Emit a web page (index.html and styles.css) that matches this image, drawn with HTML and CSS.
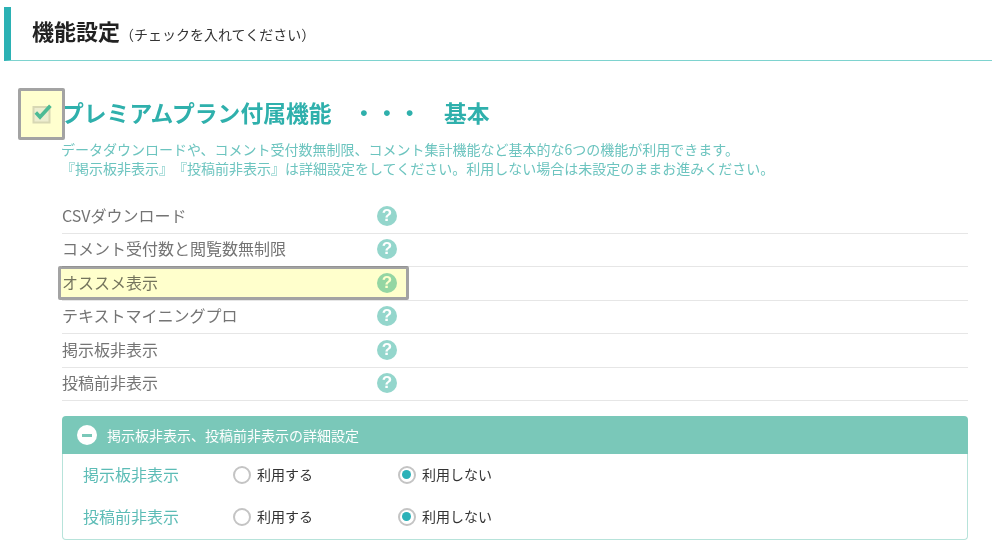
FILE: index.html
```html
<!DOCTYPE html>
<html lang="ja">
<head>
<meta charset="utf-8">
<title>機能設定</title>
<link rel="stylesheet" href="styles.css">
</head>
<body>
<div class="page">
  <header class="head">
    <h1 class="head-title">機能設定</h1>
    <span class="head-note">（チェックを入れてください）</span>
  </header>

  <section class="plan">
    <div class="plan-head">
      <span class="check-wrap">
        <svg class="check" width="20" height="20" viewBox="0 0 20 20">
          <rect x="1.5" y="3" width="16" height="15.5" fill="#eeeed0" stroke="#d8d8b4" stroke-width="2"/>
          <path d="M3.8 8.6 L8 13 L18.4 1.8" fill="none" stroke="#4dbb95" stroke-width="3.6"/>
        </svg>
      </span>
      <h2 class="plan-title"><span>プレミアムプラン付属機能</span><span class="dots">・・・</span><span>基本</span></h2>
    </div>
    <p class="plan-desc">データダウンロードや、コメント受付数無制限、コメント集計機能など基本的な6つの機能が利用できます。<br>『掲示板非表示』『投稿前非表示』は詳細設定をしてください。利用しない場合は未設定のままお進みください。</p>

    <ul class="features">
      <li class="feature"><span class="feature-name">CSVダウンロード</span><span class="help">?</span></li>
      <li class="feature"><span class="feature-name">コメント受付数と閲覧数無制限</span><span class="help">?</span></li>
      <li class="feature"><span class="feature-name">オススメ表示</span><span class="help">?</span><span class="mark"></span></li>
      <li class="feature"><span class="feature-name">テキストマイニングプロ</span><span class="help">?</span></li>
      <li class="feature"><span class="feature-name">掲示板非表示</span><span class="help">?</span></li>
      <li class="feature"><span class="feature-name">投稿前非表示</span><span class="help">?</span></li>
    </ul>

    <div class="detail">
      <div class="detail-bar">
        <span class="minus"></span>
        <span class="detail-title">掲示板非表示、投稿前非表示の詳細設定</span>
      </div>
      <div class="detail-body">
        <div class="opt-row">
          <span class="opt-name">掲示板非表示</span>
          <span class="opt"><span class="radio"></span><span class="opt-text">利用する</span></span>
          <span class="opt"><span class="radio on"></span><span class="opt-text">利用しない</span></span>
        </div>
        <div class="opt-row">
          <span class="opt-name">投稿前非表示</span>
          <span class="opt"><span class="radio"></span><span class="opt-text">利用する</span></span>
          <span class="opt"><span class="radio on"></span><span class="opt-text">利用しない</span></span>
        </div>
      </div>
    </div>
  </section>
</div>
</body>
</html>
```
FILE: styles.css
```css
* { box-sizing: border-box; }
html, body { margin: 0; padding: 0; background: #fff; }
body {
  width: 1002px;
  height: 546px;
  overflow: hidden;
  font-family: "Noto Sans CJK JP", "Noto Sans", sans-serif;
  color: #333;
  text-spacing-trim: space-all;
}
.page { padding: 7px 10px 0 4px; }

.head {
  height: 54px;
  display: flex;
  align-items: center;
  padding: 0 0 7px 21px;
  border-left: 7px solid #2bb1b4;
  border-bottom: 1px solid #7ed3cf;
}
.head-title { margin: 0; font-size: 22px; line-height: 28px; font-weight: 700; color: #222; }
.head-note { margin: 7px 0 0; font-size: 14px; line-height: 20px; color: #333; }

.plan { padding: 27px 24px 0 57px; }
.plan-head { height: 52px; display: flex; align-items: center; position: relative; }
.check-wrap {
  position: absolute;
  left: -43px;
  top: 0;
  width: 47px;
  height: 52px;
  display: flex;
  align-items: center;
  justify-content: center;
  background: #ffffcf;
  border: 3px solid #a3a3a3;
  border-radius: 2px;
}
.plan-title {
  margin: -2px 0 0;
  display: flex;
  font-size: 22.8px;
  line-height: 28px;
  font-weight: 700;
  color: #2fb0ac;
}
.dots { margin: 0 23px 0 21px; }
.plan-desc { margin: 0; font-size: 14px; line-height: 19px; color: #6cc4bf; white-space: nowrap; }

.features { list-style: none; margin: 22px 0 0 1px; padding: 0; width: 906px; }
.feature {
  position: relative;
  height: 33.5px;
  display: flex;
  align-items: center;
  border-bottom: 1px solid #e6e6e6;
  font-size: 16px;
  color: #747474;
}
.feature-name { width: 315px; margin-top: -3px; }
.help {
  width: 20px;
  height: 20px;
  margin-top: -1px;
  border-radius: 50%;
  background: #94d6cc;
  color: #fff;
  font-family: "Liberation Sans", sans-serif;
  font-size: 17px;
  font-weight: 700;
  line-height: 20px;
  text-align: center;
}
.mark {
  position: absolute;
  left: -4px;
  top: -1px;
  width: 351px;
  height: 34px;
  background: #ffffcc;
  mix-blend-mode: multiply;
  border: 3px solid #a3a3a3;
  border-radius: 2px;
}

.detail { margin: 15px 0 0 1px; width: 906px; }
.detail-bar {
  height: 38px;
  display: flex;
  align-items: center;
  padding-left: 15px;
  background: #7ac8b9;
  border-radius: 4px 4px 0 0;
  color: #fff;
  font-size: 14px;
}
.minus {
  position: relative;
  width: 20px;
  height: 20px;
  margin-right: 10px;
  border-radius: 50%;
  background: #fff;
}
.minus::after {
  content: "";
  position: absolute;
  left: 5px;
  top: 8.5px;
  width: 10px;
  height: 3px;
  background: #7ac8b9;
}
.detail-body {
  height: 86px;
  padding: 0 20px;
  border: 1px solid #b7e3da;
  border-top: 0;
  border-radius: 0 0 4px 4px;
}
.opt-row { height: 42px; display: flex; align-items: center; }
.opt-name { width: 150px; font-size: 16px; color: #5cbcb6; margin-top: -3px; }
.opt { width: 165px; display: flex; align-items: center; font-size: 14px; color: #333; }
.opt-text { margin-top: -2px; }
.radio {
  width: 18px;
  height: 18px;
  margin-right: 6px;
  border: 2.5px solid #c4c4c4;
  border-radius: 50%;
  background: #fff;
  position: relative;
}
.radio.on::after {
  content: "";
  position: absolute;
  left: 2px;
  top: 2px;
  width: 9px;
  height: 9px;
  border-radius: 50%;
  background: #2bb1b8;
}
```
